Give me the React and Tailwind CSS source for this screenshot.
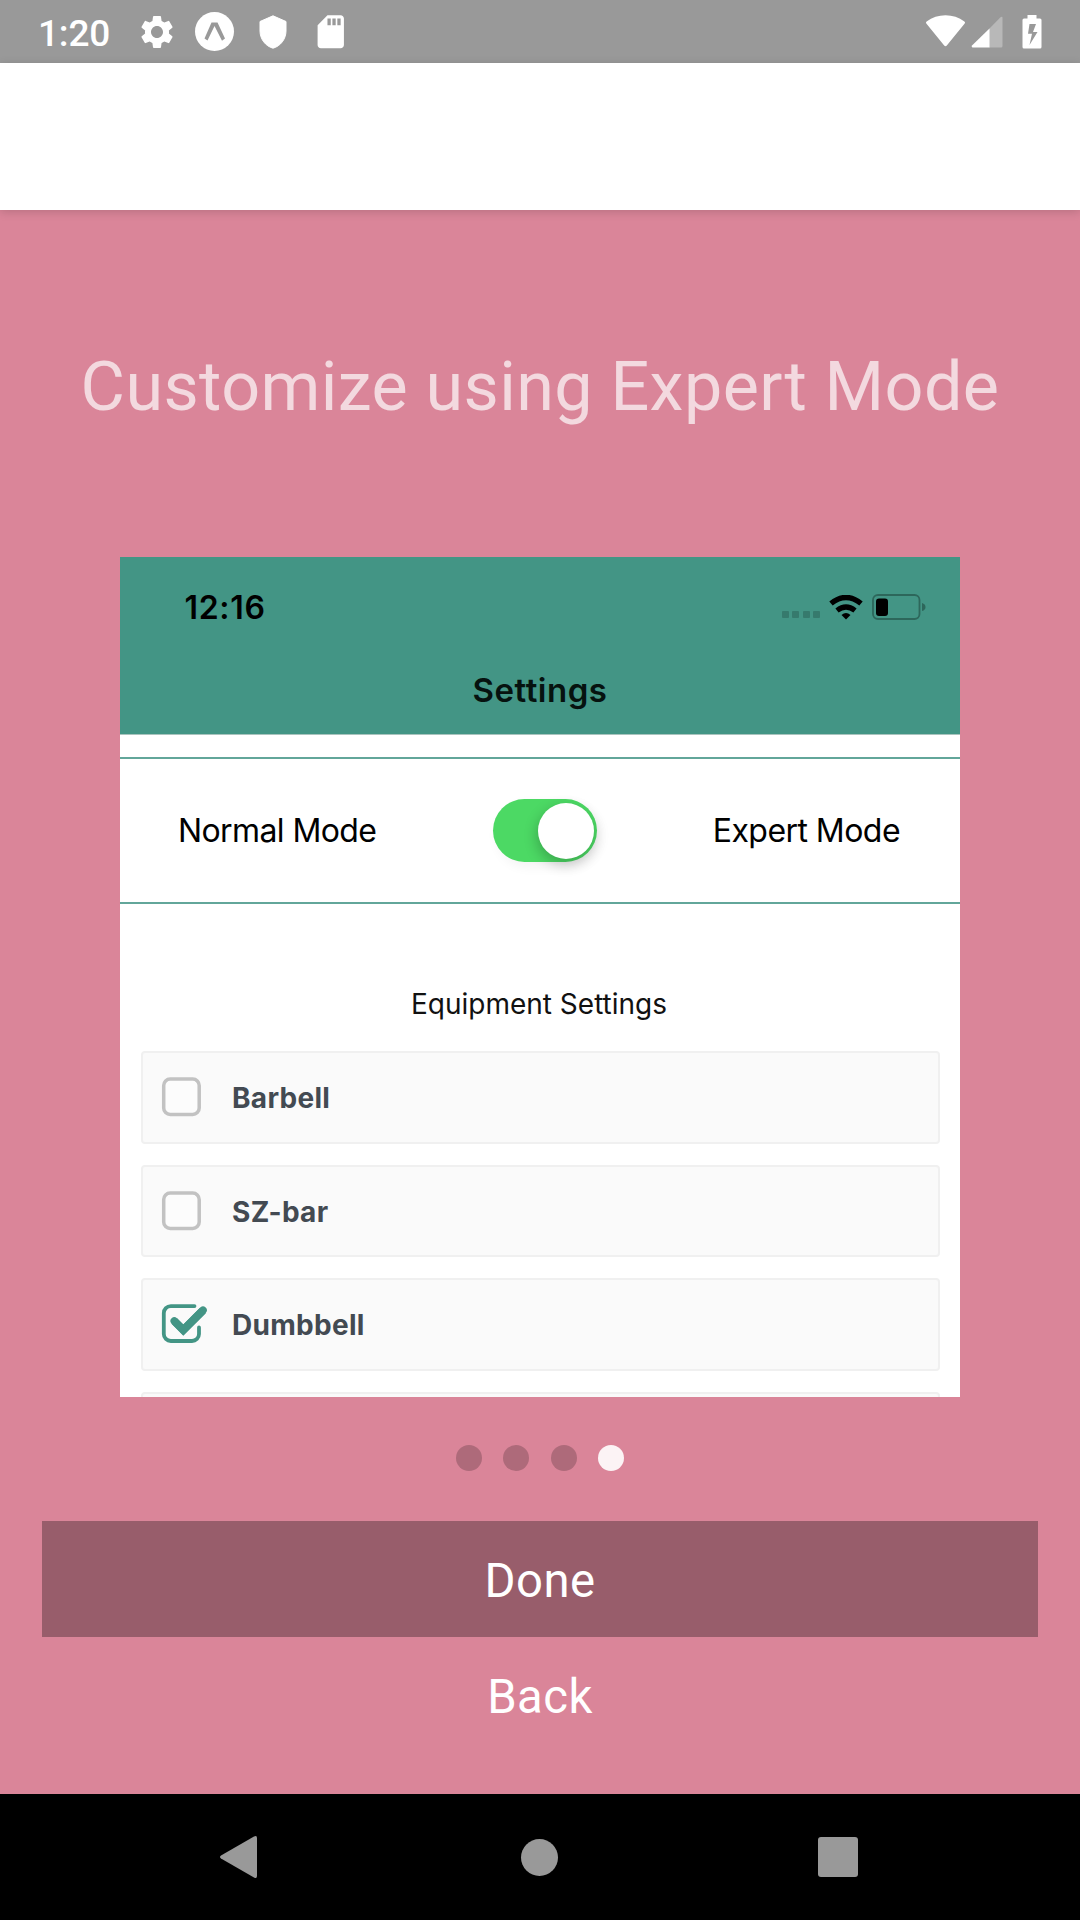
import React from "react";
import { MdSettings, MdSdCard } from "react-icons/md";

function StatusBar() {
  return (
    <div className="flex h-[63px] items-center bg-[#999999] pl-[38px] text-white">
      <span className="w-[98.500px] font-['Roboto',sans-serif] text-[37px] font-medium leading-[63px] tracking-[-0.200px] pt-[3px]">1:20</span>
      <MdSettings className="size-[40px]" />
      <svg className="ml-[18px] size-[40px]" viewBox="0 0 40 40">
        <circle cx="19.5" cy="19.5" r="19.5" fill="#fff" />
        <path d="M16.500 10.500h6l7.500 16-3 2.200L19.500 14 12.500 28.500 9.500 26.500z" fill="#999" />
      </svg>
      <svg className="ml-[24.500px] h-[34px] w-[28px]" viewBox="0 0 28 34">
        <path d="M14 .8 27 6.500v9.500c0 8-5.500 15.200-13 17.200C6.500 31.200 1 24 1 16V6.500z" fill="#fff" stroke="#fff" strokeWidth="1" strokeLinejoin="round" />
      </svg>
      <MdSdCard className="ml-[24px] size-[39.500px]" />
      <svg className="ml-auto h-[36px] w-[41px]" viewBox="0 0 41 36">
        <path d="M1.300 9.500 19.200 31.500Q20.500 33 21.800 31.500L39.700 9.500Q40.600 8.400 39.400 7.500 31 1.300 20.500 1.300T1.600 7.500Q.4 8.400 1.300 9.500z" fill="#fff" />
      </svg>
      <svg className="ml-[5px] h-[32px] w-[32px]" viewBox="0 0 32 32">
        <path d="M18 13 29.500 1.300Q31.500 0 31.500 2V30Q31.500 31.500 30 31.500H18z" fill="#b8b8b8" />
        <path d="M18.500 12.500V31.500H1.500Q0 31 1 29.600z" fill="#fff" />
      </svg>
      <svg className="ml-[19px] mr-[38.500px] h-[34px] w-[20px]" viewBox="0 0 20 34">
        <path fillRule="evenodd" d="M5.500 0h9v3.500H18q1.500 0 1.500 1.500v27q0 1.500-1.500 1.500H2Q.5 33.500 .5 32V5Q.5 3.500 2 3.500h3.500zM7.500 9 6 18.800h4L7.500 30 15.500 17h-4.500L14 9z" fill="#fff" />
      </svg>
    </div>
  );
}

function CheckRow({ label, checked }) {
  return (
    <div className="flex h-[92.500px] shrink-0 items-center rounded-[4px] border-2 border-[#f0f0f0] bg-[#fafafa] pl-[18px]">
      <svg className="h-[40px] w-[48px] shrink-0 overflow-visible" viewBox="0 0 48 40">
        {checked ? (
          <>
            <path d="M33.500 2.100H9.800a7 7 0 0 0-7 7V30a7 7 0 0 0 7 7H31a7 7 0 0 0 7-7V23.500" fill="none" stroke="#439585" strokeWidth="3.800" strokeLinecap="round" />
            <path d="M13.300 17 22.300 26 42 6.300" fill="none" stroke="#439585" strokeWidth="8" strokeLinejoin="miter" />
            <path d="M13.300 17 22.300 26 42 6.300" fill="none" stroke="#439585" strokeWidth="7.600" strokeLinejoin="miter" strokeLinecap="round" />
          </>
        ) : (
          <rect x="2.700" y="2" width="35.500" height="35.500" rx="6.500" fill="#fcfcfc" stroke="#c2c2c2" strokeWidth="3.500" />
        )}
      </svg>
      <span className="ml-[23.500px] pt-[2px] text-[28px] font-bold leading-none tracking-[0.300px] text-[#434a52]">{label}</span>
    </div>
  );
}

function SettingsPreview() {
  return (
    <div className="mx-auto flex h-[840px] w-[840px] flex-col overflow-hidden bg-white font-['Inter',sans-serif] text-black">
      <div className="h-[178px] shrink-0 border-b border-[#a9c4be] bg-[#439585]">
        <div className="flex h-[100px] items-center pl-[64.500px] pr-[34px]">
          <span className="pt-[2px] text-[32px] font-semibold leading-none tracking-[0.700px]">12:16</span>
          <div className="ml-auto mt-[15px] flex gap-[3.500px]">
            <i className="h-[7px] w-[7px] rounded-[1px] bg-[#367a6d]" />
            <i className="h-[7px] w-[7px] rounded-[1px] bg-[#367a6d]" />
            <i className="h-[7px] w-[7px] rounded-[1px] bg-[#367a6d]" />
            <i className="h-[7px] w-[7px] rounded-[1px] bg-[#367a6d]" />
          </div>
          <svg className="ml-[8.500px] h-[25px] w-[34px]" viewBox="0 0 34 25">
            <path d="M2 8.500Q17-3.500 32 8.500" fill="none" stroke="#000" strokeWidth="5.400" />
            <path d="M8 15.500Q17 8.500 26 15.500" fill="none" stroke="#000" strokeWidth="5.200" />
            <path d="M12.500 20Q17 16 21.500 20L17 24.500z" fill="#000" />
          </svg>
          <svg className="ml-[9.500px] h-[26px] w-[54px]" viewBox="0 0 54 26">
            <rect x="1" y="1" width="46.500" height="24" rx="5" fill="none" stroke="#2d675b" strokeWidth="1.800" />
            <rect x="4" y="4.500" width="12" height="17.500" rx="3" />
            <path d="M50 9q3.500 1 3.500 4T50 17z" fill="#2d675b" />
          </svg>
        </div>
        <div className="pt-[13px] text-center text-[33px] font-semibold leading-[40px] tracking-[0.500px] text-[#06120f]">Settings</div>
      </div>
      <div className="mt-[22px] flex h-[147px] shrink-0 items-center border-y-2 border-[#62a69a] px-[58px]">
        <span className="w-[255px] text-[32px] leading-none tracking-[-0.600px] whitespace-nowrap">Normal Mode</span>
        <div className="ml-[60px] flex h-[63px] w-[104px] shrink-0 items-center justify-end rounded-full bg-[#4cd964] pr-[3.500px] shadow-[4px_5px_12px_rgba(0,0,0,0.050)]">
          <div className="size-[56px] rounded-full bg-white shadow-[-1px_5px_14px_rgba(0,0,0,0.240)]" />
        </div>
        <span className="ml-auto mr-[2px] text-[32px] leading-none tracking-[-0.550px] whitespace-nowrap">Expert Mode</span>
      </div>
      <div className="mt-[79.500px] h-[67.500px] shrink-0 pr-[2px] text-center text-[28px] leading-[40px] text-[#111111]">Equipment Settings</div>
      <div className="ml-[20.500px] mr-[20.500px] flex flex-col gap-[21px]">
        <CheckRow label="Barbell" />
        <CheckRow label="SZ-bar" />
        <CheckRow label="Dumbbell" checked />
        <CheckRow label="" />
      </div>
    </div>
  );
}

export default function App() {
  return (
    <div className="flex h-[1920px] w-[1080px] flex-col overflow-hidden bg-[#da8599] font-['Roboto',sans-serif]">
      <StatusBar />
      <div className="h-[147px] shrink-0 bg-white shadow-[0_2px_9px_rgba(0,0,0,0.160)]" />
      <h1 className="h-[347px] shrink-0 pt-[137px] text-center text-[68.250px] leading-[80px] tracking-[0.420px] text-[#f3d9df] whitespace-nowrap">Customize using Expert Mode</h1>
      <SettingsPreview />
      <div className="mt-[48px] flex justify-center gap-[21.300px]">
        <i className="size-[26px] rounded-full bg-[#ae6a7a]" />
        <i className="size-[26px] rounded-full bg-[#ae6a7a]" />
        <i className="size-[26px] rounded-full bg-[#ae6a7a]" />
        <i className="size-[26px] rounded-full bg-[#fcf3f5]" />
      </div>
      <button className="mx-[42px] mt-[50px] h-[116px] shrink-0 bg-[#985d6b] pt-[5px] text-[47.250px] leading-none tracking-[0.450px] text-white">Done</button>
      <button className="mx-[42px] h-[116px] shrink-0 pt-[5px] text-[47.250px] leading-none tracking-[0.450px] text-white">Back</button>
      <nav className="mt-auto flex h-[126px] shrink-0 items-center bg-black pl-[219px]">
        <svg className="h-[44px] w-[40px]" viewBox="0 0 40 44">
          <path d="M2 20.500 35 1.500Q38 0 38 3V41Q38 44 35 42.500L2 23.500Q0 22 2 20.500z" fill="#999" />
        </svg>
        <div className="ml-[262px] size-[37px] rounded-full bg-[#999999]" />
        <div className="ml-[260px] size-[40px] rounded-[3px] bg-[#999999]" />
      </nav>
    </div>
  );
}
